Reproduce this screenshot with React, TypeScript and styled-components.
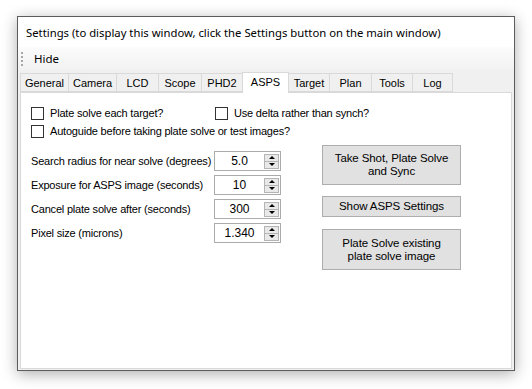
import React from "react";
import styled, { createGlobalStyle } from "styled-components";

const GlobalStyle = createGlobalStyle`
  html, body { margin: 0; padding: 0; background: #ffffff; }
  * { box-sizing: border-box; }
`;

const Page = styled.div`
  padding: 16px 0 0 17px;
  width: 532px;
  height: 389px;
  overflow: hidden;
`;

const Window = styled.div`
  width: 498px;
  height: 355px;
  border: 1px solid #5c5c5c;
  background: #f0f0f0;
  box-shadow: 0 3px 14px rgba(0, 0, 0, 0.32);
  display: flex;
  flex-direction: column;
`;

const TitleBar = styled.div`
  height: 30px;
  background: #ffffff;
  display: flex;
  align-items: center;
  padding-left: 8px;
  padding-top: 1px;
  font-family: "Noto Sans", sans-serif;
  font-size: 11.3px;
  color: #000;
  white-space: nowrap;
`;

const MenuStrip = styled.div`
  height: 23px;
  background: linear-gradient(#fbfbfb, #f2f2f2);
  display: flex;
  align-items: center;
  padding-left: 3px;
`;

const Grip = styled.div`
  width: 2px;
  height: 14px;
  margin-right: 11px;
  background: repeating-linear-gradient(#a8a8a8 0 2px, transparent 2px 4px);
`;

const MenuItem = styled.span`
  font-family: "Noto Sans", sans-serif;
  font-size: 11.5px;
  color: #000;
`;

const TabStrip = styled.div`
  height: 22px;
  display: flex;
  align-items: flex-end;
  padding-left: 2px;
`;

const Tab = styled.div<{ $w: number; $active?: boolean }>`
  width: ${(p) => p.$w + 1}px;
  height: ${(p) => (p.$active ? 21 : 19)}px;
  margin-left: -1px;
  margin-bottom: ${(p) => (p.$active ? -1 : 0)}px;
  border: 1px solid #d9d9d9;
  border-bottom: ${(p) => (p.$active ? "none" : "1px solid #d9d9d9")};
  background: ${(p) => (p.$active ? "#ffffff" : "#f0f0f0")};
  font-family: "Liberation Sans", Arial, sans-serif;
  font-size: 11px;
  color: #000;
  display: flex;
  align-items: ${(p) => (p.$active ? "flex-start" : "center")};
  padding-top: ${(p) => (p.$active ? 3 : 0)}px;
  justify-content: center;
  position: relative;
  z-index: ${(p) => (p.$active ? 1 : 0)};
  &:first-child { margin-left: 0; }
`;

const Panel = styled.div`
  flex: 1;
  margin: 0 2px 1px 2px;
  background: #ffffff;
  border: 1px solid #d9d9d9;
  padding: 11px 0 0 10px;
  font-family: "Liberation Sans", Arial, sans-serif;
  font-size: 11px;
  letter-spacing: -0.2px;
  color: #000;
`;

const CheckRow = styled.div`
  height: 18px;
  display: flex;
  align-items: center;
`;

const CheckItem = styled.label<{ $w?: number }>`
  display: flex;
  align-items: center;
  ${(p) => (p.$w ? `width: ${p.$w}px;` : "")}
`;

const Box = styled.span`
  width: 13px;
  height: 13px;
  border: 1px solid #333333;
  background: #ffffff;
  margin-right: 6px;
  flex: none;
`;

const Bottom = styled.div`
  display: flex;
  margin-top: 5px;
`;

const FormColumn = styled.div`
  width: 250px;
  padding-top: 6px;
  display: flex;
  flex-direction: column;
  gap: 4px;
`;

const FieldRow = styled.div`
  height: 20px;
  display: flex;
  align-items: center;
`;

const FieldLabel = styled.span`
  width: 183px;
  white-space: nowrap;
`;

const Spin = styled.div`
  width: 67px;
  height: 20px;
  border: 1px solid #ababab;
  background: #ffffff;
  display: flex;
  align-items: center;
  letter-spacing: 0;
`;

const SpinValue = styled.span`
  flex: 1;
  text-align: center;
  font-size: 12px;
  color: #000;
`;

const SpinButtons = styled.div`
  width: 15px;
  height: 15px;
  margin-right: 1px;
  display: flex;
  flex-direction: column;
  border: 1px solid #b4b4b4;
`;

const SpinHalf = styled.div<{ $down?: boolean }>`
  flex: 1;
  background: #e9e9e9;
  display: flex;
  align-items: center;
  justify-content: center;
  ${(p) => (p.$down ? "border-top: 1px solid #b4b4b4;" : "")}
`;

const Arrow = styled.span<{ $down?: boolean }>`
  width: 0;
  height: 0;
  border-left: 3px solid transparent;
  border-right: 3px solid transparent;
  ${(p) =>
    p.$down ? "border-top: 3px solid #000;" : "border-bottom: 3px solid #000;"}
`;

const ButtonColumn = styled.div`
  margin-left: 41px;
  display: flex;
  flex-direction: column;
`;

const Button = styled.button<{ $h: number; $gap?: number }>`
  width: 139px;
  height: ${(p) => p.$h}px;
  margin-top: ${(p) => p.$gap ?? 0}px;
  background: #e1e1e1;
  border: 1px solid #adadad;
  font-family: "Liberation Sans", Arial, sans-serif;
  font-size: 11.5px;
  line-height: 13px;
  letter-spacing: -0.1px;
  color: #000;
  padding: 0 4px;
  text-align: center;
`;

const tabs: { label: string; w: number; active?: boolean }[] = [
  { label: "General", w: 48 },
  { label: "Camera", w: 48 },
  { label: "LCD", w: 42 },
  { label: "Scope", w: 43 },
  { label: "PHD2", w: 41 },
  { label: "ASPS", w: 46, active: true },
  { label: "Target", w: 41 },
  { label: "Plan", w: 42 },
  { label: "Tools", w: 41 },
  { label: "Log", w: 40 },
];

const fields = [
  { label: "Search radius for near solve (degrees)", value: "5.0" },
  { label: "Exposure for ASPS image (seconds)", value: "10" },
  { label: "Cancel plate solve after (seconds)", value: "300" },
  { label: "Pixel size (microns)", value: "1.340" },
];

export default function App() {
  return (
    <>
      <GlobalStyle />
      <Page>
        <Window>
          <TitleBar>
            Settings (to display this window, click the Settings button on the main window)
          </TitleBar>
          <MenuStrip>
            <Grip />
            <MenuItem>Hide</MenuItem>
          </MenuStrip>
          <TabStrip>
            {tabs.map((t) => (
              <Tab key={t.label} $w={t.w} $active={t.active}>
                {t.label}
              </Tab>
            ))}
          </TabStrip>
          <Panel>
            <CheckRow>
              <CheckItem $w={184}>
                <Box />
                Plate solve each target?
              </CheckItem>
              <CheckItem>
                <Box />
                Use delta rather than synch?
              </CheckItem>
            </CheckRow>
            <CheckRow>
              <CheckItem>
                <Box />
                Autoguide before taking plate solve or test images?
              </CheckItem>
            </CheckRow>
            <Bottom>
              <FormColumn>
                {fields.map((f) => (
                  <FieldRow key={f.label}>
                    <FieldLabel>{f.label}</FieldLabel>
                    <Spin>
                      <SpinValue>{f.value}</SpinValue>
                      <SpinButtons>
                        <SpinHalf>
                          <Arrow />
                        </SpinHalf>
                        <SpinHalf $down>
                          <Arrow $down />
                        </SpinHalf>
                      </SpinButtons>
                    </Spin>
                  </FieldRow>
                ))}
              </FormColumn>
              <ButtonColumn>
                <Button $h={40}>
                  Take Shot, Plate Solve
                  <br />
                  and Sync
                </Button>
                <Button $h={21} $gap={11}>
                  Show ASPS Settings
                </Button>
                <Button $h={41} $gap={12}>
                  Plate Solve existing
                  <br />
                  plate solve image
                </Button>
              </ButtonColumn>
            </Bottom>
          </Panel>
        </Window>
      </Page>
    </>
  );
}
